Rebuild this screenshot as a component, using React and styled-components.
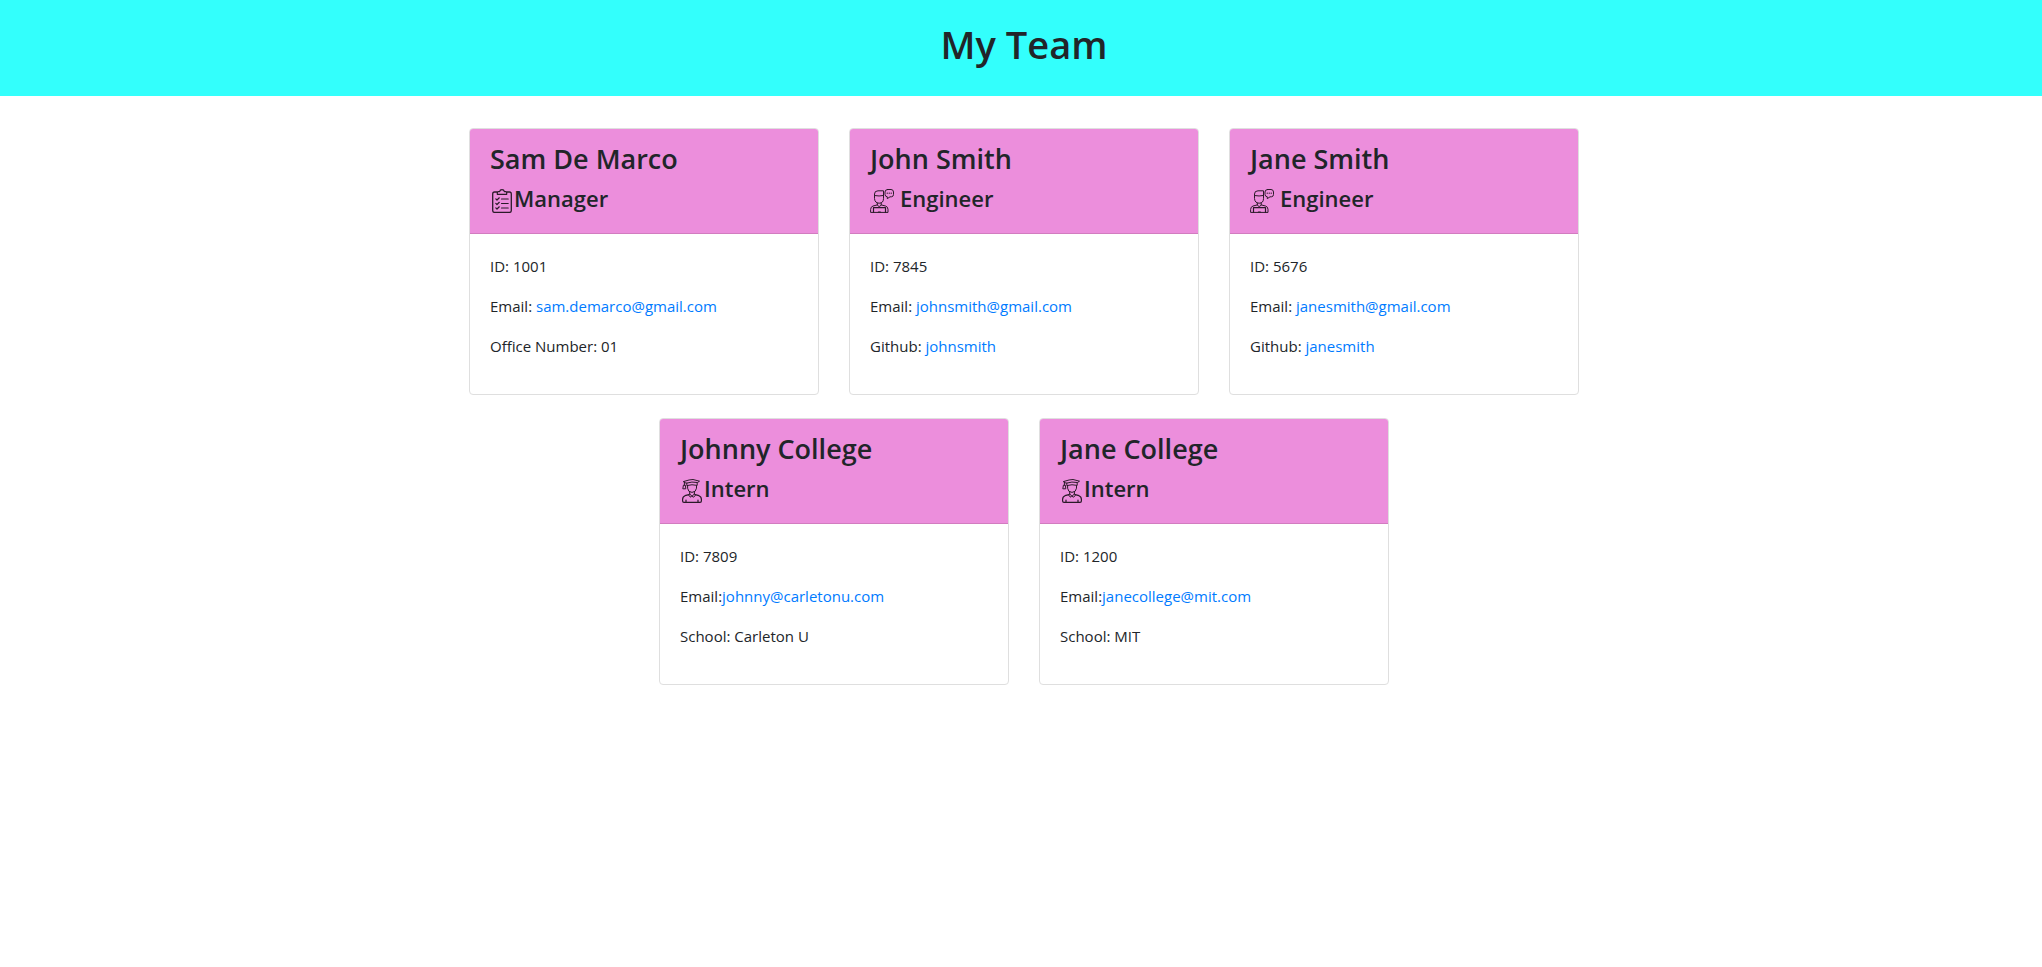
import React from "react";
import styled, { createGlobalStyle } from "styled-components";

const GlobalStyle = createGlobalStyle`
  *, *::before, *::after { box-sizing: border-box; }
  body {
    margin: 0;
    background: #fff;
    color: #212529;
    font-family: "Segoe UI", "Open Sans", "Noto Sans", sans-serif;
    font-size: 15px;
    line-height: 24px;
  }
`;

const Banner = styled.header`
  padding: 20px 0 28px 6px;
  background: #33fffc;
  text-align: center;
`;

const Title = styled.h1`
  margin: 0;
  font-size: 38px;
  font-weight: 600;
  line-height: 48px;
`;

const Team = styled.main`
  display: flex;
  flex-direction: column;
  gap: 23px;
  padding: 32px 0 24px 6px;
`;

const TeamRow = styled.section`
  display: flex;
  flex-wrap: wrap;
  justify-content: center;
  gap: 23px 30px;
`;

const Card = styled.article`
  width: 350px;
  overflow: hidden;
  border: 1px solid #dfdfdf;
  border-radius: 4px;
  background: #fff;
`;

const CardHeader = styled.div`
  padding: 12px 20px 20px;
  background: #ec8edc;
  border-bottom: 1px solid #d27cc0;
`;

const Name = styled.h2`
  margin: 0 0 6px;
  font-size: 27px;
  font-weight: 600;
  line-height: 36px;
`;

const Role = styled.h3`
  display: flex;
  align-items: flex-start;
  gap: ${(p) => (p.$spaced ? "6px" : "0")};
  margin: 0;
  font-size: 22px;
  font-weight: 600;
  line-height: 30px;
`;

const Icon = styled.svg`
  flex: none;
  width: 24px;
  height: 24px;
  margin-top: 6px;
  fill: none;
  stroke: #2b1a29;
  stroke-width: 1;
  stroke-linecap: round;
  stroke-linejoin: round;
`;

const CardBody = styled.div`
  padding: 20px;
`;

const Detail = styled.p`
  margin: 0 0 16px;
`;

const Link = styled.a`
  color: #007bff;
  text-decoration: none;
  &:hover { text-decoration: underline; }
`;

const ManagerIcon = () => (
  <Icon viewBox="0 0 24 24" aria-hidden="true">
    <path strokeWidth="1.3" d="M7 3H4.5Q2.7 3 2.7 5V21.5Q2.7 23.4 4.5 23.4H19.5Q21.3 23.4 21.3 21.5V5Q21.3 3 19.5 3H17" />
    <path strokeWidth="1.2" d="M7.3 5.3V3.5Q7.3 2.6 8.3 2.6H9.6Q10 .6 12 .6T14.4 2.6H15.7Q16.7 2.6 16.7 3.5V5.3Z" />
    <path strokeWidth="1.2" d="M5.8 9.8L7 11 9.3 8.8M11.5 10H18.2M5.8 14.3L7 15.5 9.3 13.3M11.5 14.5H18.2M5.8 18.8L7 20 9.3 17.8M11.5 19H18.2" />
  </Icon>
);

const EngineerIcon = () => (
  <Icon viewBox="0 0 24 24" aria-hidden="true">
    <path d="M4.5 8V5Q4.5 1.8 8 1.8H13.5V9.5Q13.5 14.2 9.2 14.2T4.5 9.5V6.5Q9 7.5 13.5 6.5" />
    <path d="M7.3 14V16.2L9.2 17.6 11.2 16.2V14" />
    <path d="M7 16L3 17Q.7 17.7.6 20.5V23.4H18V20.5Q18 17.7 15.5 17L11.5 16" />
    <path strokeWidth="1.2" d="M3.5 23.4V18.7H15.5V23.4M8.4 23H10.4" />
    <path d="M17.5.5H21Q23.5.6 23.5 3V5.5Q23.5 7.6 21.4 7.8H20L17.3 9.7V7.8Q15 7.6 15 5.3V3Q15 .6 17.5.5Z" />
    <path strokeWidth="1.2" d="M17.2 4.2H17.3M19.2 4.2H19.3M21.2 4.2H21.3" />
  </Icon>
);

const InternIcon = () => (
  <Icon viewBox="0 0 24 24" aria-hidden="true">
    <path d="M3.7 2.5Q10 .4 13 .5L19.5 2.2 17.5 3.5Q12 2.3 6.5 4.1Z" />
    <path d="M6.8 4V6.6Q12 5 17.2 6.4V3.8M4.4 3V6.2M3.8 6.2H5.4L5.8 9.8H3.2Z" />
    <path d="M7.6 6.8V9.2Q8 13.2 12 13.4 16 13.2 16.5 9.2V6.8" />
    <path d="M9.7 13.2V15L12 17.2 14.4 15V13.2M9.5 15L8.8 16.7 11 18.2 12 17.2 13.2 18.2 15.3 16.7 14.5 15" />
    <path strokeWidth="1.2" d="M8.8 15.6L5 16.7Q2.6 17.6 2.6 20.5V22Q2.6 23.4 4 23.4H20Q21.4 23.4 21.4 22V20.5Q21.4 17.6 19 16.7L15.3 15.6M6 21V23M18 21V23" />
  </Icon>
);

const ICONS = { Manager: ManagerIcon, Engineer: EngineerIcon, Intern: InternIcon };

const ROWS = [
  [
    { name: "Sam De Marco", role: "Manager", id: "1001", email: "sam.demarco@gmail.com", label: "Office Number", value: "01" },
    { name: "John Smith", role: "Engineer", id: "7845", email: "johnsmith@gmail.com", label: "Github", value: "johnsmith" },
    { name: "Jane Smith", role: "Engineer", id: "5676", email: "janesmith@gmail.com", label: "Github", value: "janesmith" },
  ],
  [
    { name: "Johnny College", role: "Intern", id: "7809", email: "johnny@carletonu.com", label: "School", value: "Carleton U" },
    { name: "Jane College", role: "Intern", id: "1200", email: "janecollege@mit.com", label: "School", value: "MIT" },
  ],
];

function MemberCard({ member }) {
  const { name, role, id, email, label, value } = member;
  const RoleIcon = ICONS[role];
  return (
    <Card>
      <CardHeader>
        <Name>{name}</Name>
        <Role $spaced={role === "Engineer"}>
          <RoleIcon />
          <span>{role}</span>
        </Role>
      </CardHeader>
      <CardBody>
        <Detail>ID: {id}</Detail>
        <Detail>
          Email:{role === "Intern" ? "" : " "}
          <Link href={`mailto:${email}`}>{email}</Link>
        </Detail>
        <Detail>
          {label}: {label === "Github" ? <Link href={`https://github.com/${value}`}>{value}</Link> : value}
        </Detail>
      </CardBody>
    </Card>
  );
}

export default function App() {
  return (
    <>
      <GlobalStyle />
      <Banner>
        <Title>My Team</Title>
      </Banner>
      <Team>
        {ROWS.map((row, i) => (
          <TeamRow key={i}>
            {row.map((member) => (
              <MemberCard key={member.name} member={member} />
            ))}
          </TeamRow>
        ))}
      </Team>
    </>
  );
}
